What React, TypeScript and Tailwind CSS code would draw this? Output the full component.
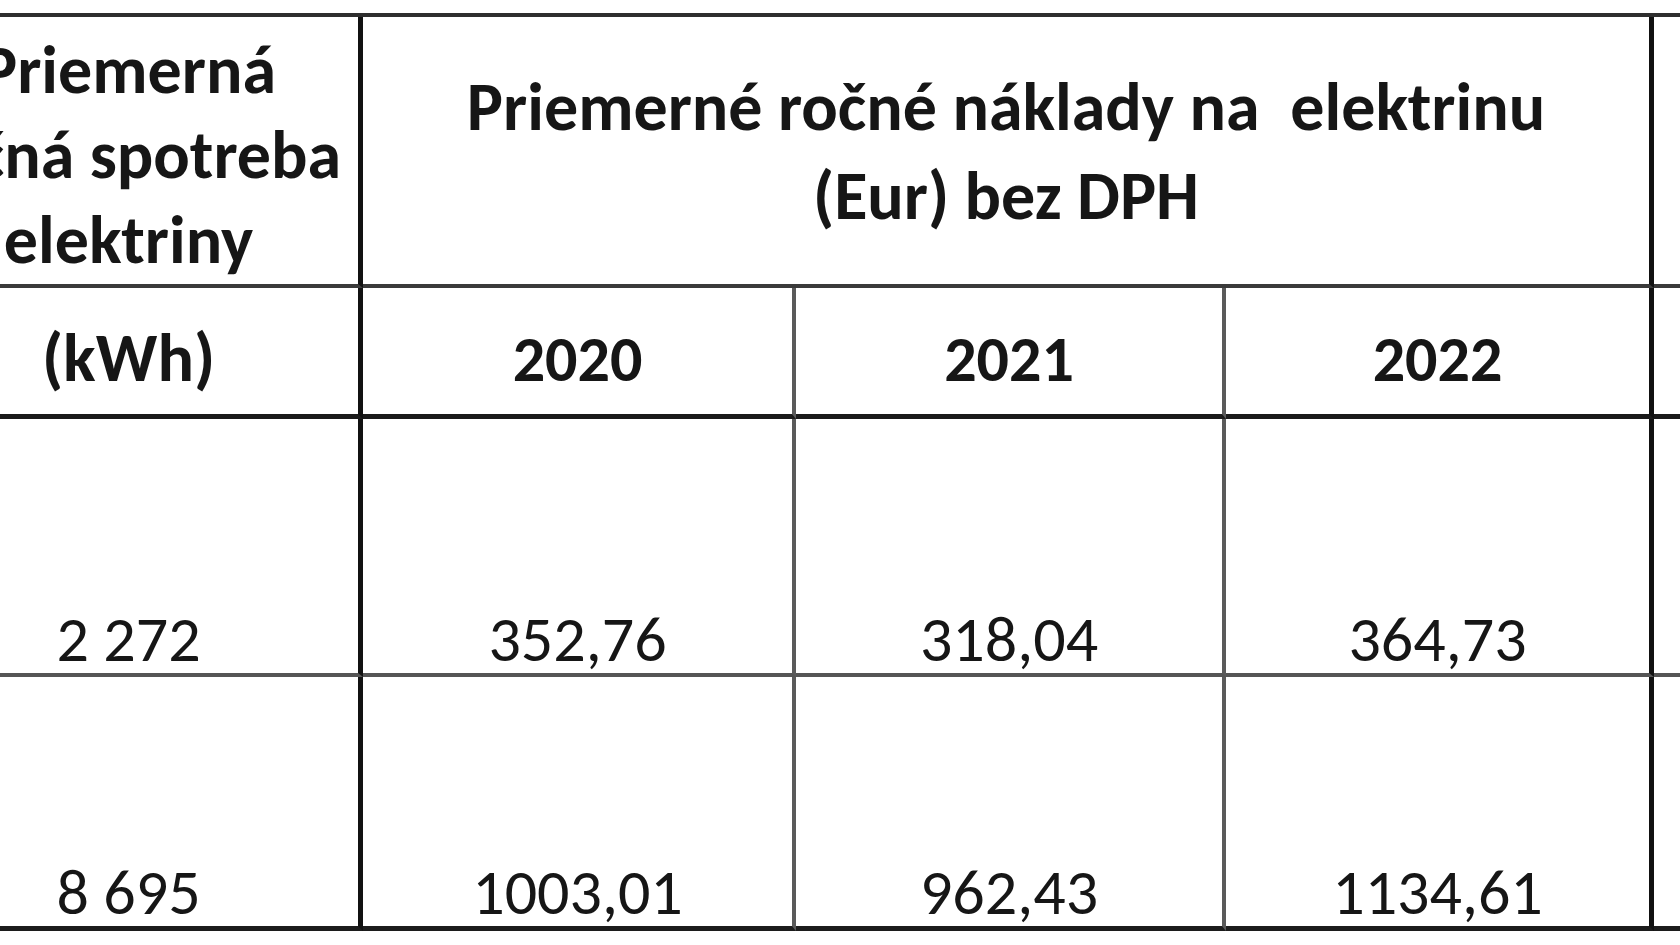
const font = { fontFamily: "Carlito, Lato, sans-serif" }

const rows = [
  { kwh: "2 272", values: ["352,76", "318,04", "364,73"], pad: "pt-[188px]", line: "border-b-[4px] border-b-[#555]" },
  { kwh: "8 695", values: ["1003,01", "962,43", "1134,61"], pad: "pt-[183px]", line: "border-b-[5px] border-b-[#1c1c1c]" },
]

const years = ["2020", "2021", "2022"]

function colBorder(i: number) {
  // last year column has the heavy rule, the others a thin one
  return i === 2 ? "border-r-[5px] border-r-[#111]" : "border-r-[4px] border-r-[#5a5a5a]"
}

export default function App() {
  return (
    <div className="h-screen w-full overflow-hidden bg-white text-[#161616]" style={font}>
      <div className="ml-[-101px] mt-[13px] grid grid-cols-[464px_433px_430px_428px_1fr] grid-rows-[271px_131px_258px_254px] border-t-[4px] border-t-[#2e2e2e]">
        {/* header */}
        <div className="flex flex-col items-center border-r-[5px] border-b-[4px] border-r-[#111] border-b-[#3a3a3a] pt-[10px] text-[68px] font-bold leading-[85px]">
          <span>Priemerná</span>
          <span>ročná spotreba</span>
          <span>elektriny</span>
        </div>
        <div className="col-span-3 flex flex-col items-center border-r-[5px] border-b-[4px] border-r-[#111] border-b-[#3a3a3a] pt-[45px] text-[68px] font-bold leading-[89px]">
          <span className="whitespace-pre">Priemerné ročné náklady na  elektrinu</span>
          <span>(Eur) bez DPH</span>
        </div>
        <div className="border-b-[4px] border-b-[#3a3a3a]" />

        {/* units + years */}
        <div className="border-r-[5px] border-b-[5px] border-r-[#111] border-b-[#1a1a1a] pt-[36px] text-center text-[68px] font-bold leading-[68px]">
          (kWh)
        </div>
        {years.map((y, i) => (
          <div
            key={y}
            className={`${colBorder(i)} border-b-[5px] border-b-[#1a1a1a] pt-[39px] text-center text-[64px] font-bold leading-[64px]`}
          >
            {y}
          </div>
        ))}
        <div className="border-b-[5px] border-b-[#1a1a1a]" />

        {/* data */}
        {rows.map((r) => (
          <>
            <div key={r.kwh} className={`border-r-[5px] border-r-[#111] ${r.line} ${r.pad} text-center text-[64px] leading-[64px]`}>
              {r.kwh}
            </div>
            {r.values.map((v, i) => (
              <div key={v} className={`${colBorder(i)} ${r.line} ${r.pad} text-center text-[64px] leading-[64px]`}>
                {v}
              </div>
            ))}
            <div className={r.line} />
          </>
        ))}
      </div>
    </div>
  )
}
